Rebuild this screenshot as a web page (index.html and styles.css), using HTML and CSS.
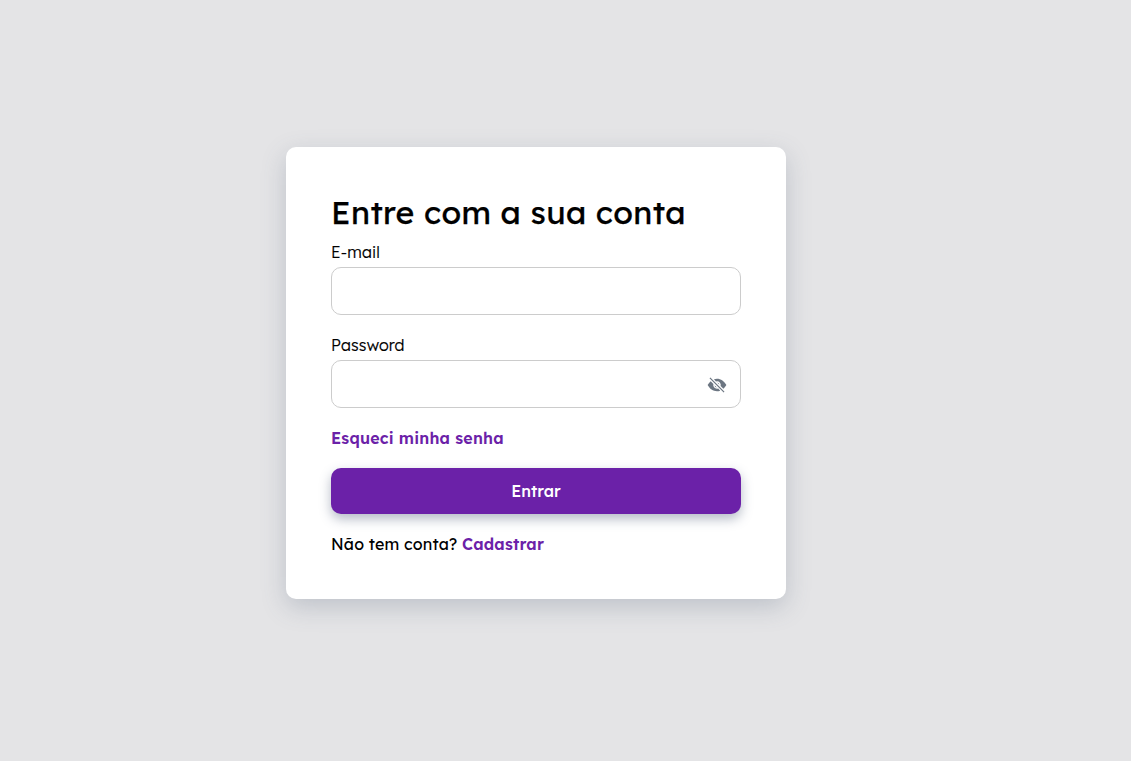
FILE: index.html
```html
<!DOCTYPE html>
<html lang="pt-BR">
<head>
<meta charset="utf-8">
<title>Entre com a sua conta</title>
<link rel="stylesheet" href="styles.css">
</head>
<body>
<main class="card">
  <h1 class="title">Entre com a sua conta</h1>
  <form class="form">
    <label class="label" for="email">E-mail</label>
    <div class="field"><input class="input" id="email" type="email"></div>
    <label class="label" for="password">Password</label>
    <div class="field">
      <input class="input" id="password" type="password">
      <svg class="eye" viewBox="0 0 512 512" fill="currentColor" aria-hidden="true">
        <path d="M63.998 86.004l21.998-21.998L448 426.01l-21.998 21.998zM259.34 192.09l60.57 60.57a64.07 64.07 0 0 0-60.57-60.57zM252.66 319.91l-60.57-60.57a64.07 64.07 0 0 0 60.57 60.57z"/>
        <path d="M256 352a96 96 0 0 1-92.6-121.34l-69.07-69.08C66.12 187.42 39.24 221.14 16 256c26.42 44 62.56 89.85 100.2 115.8C159.38 401.56 205.42 416 255.76 416a233.47 233.47 0 0 0 83.48-15.38l-52.3-52.3A96 96 0 0 1 256 352zM256 160a96 96 0 0 1 92.6 121.34L419.26 352c29.15-26.25 56.07-61.56 76.74-96-26.38-43.43-62.9-88.56-101.18-114.82C351.1 111.2 304.31 96 255.76 96a222.92 222.92 0 0 0-78.21 14.29l53.11 53.11A95.84 95.84 0 0 1 256 160z"/>
      </svg>
    </div>
    <a class="link forgot">Esqueci minha senha</a>
    <button class="button" type="button">Entrar</button>
    <p class="signup">Não tem conta? <a class="link">Cadastrar</a></p>
  </form>
</main>
</body>
</html>
```
FILE: styles.css
```css
* { box-sizing: border-box; }
body {
  margin: 0;
  height: 761px;
  padding: 147px 0 0 286px;
  overflow: hidden;
  background: #e4e4e6;
  color: #000;
  font-family: Lexend, Inter, "Open Sans", sans-serif;
  font-size: 16px;
  line-height: 20px;
  letter-spacing: .16px;
}
.card {
  width: 500px;
  height: 452px;
  padding: 45px;
  background: #fff;
  border-radius: 10px;
  box-shadow: 0 8px 24px rgba(80, 96, 120, .25);
}
.title {
  margin: 0 0 10px;
  font-size: 32px;
  font-weight: 400;
  line-height: 40px;
  letter-spacing: .35px;
  white-space: nowrap;
  -webkit-text-stroke: .25px #000;
}
.form { display: flex; flex-direction: column; }
.label { height: 25px; font-weight: 300; -webkit-text-stroke: .15px #000; }
.field { position: relative; height: 48px; margin-bottom: 20px; }
.input {
  width: 100%;
  height: 48px;
  padding: 0 44px 0 14px;
  border: 1px solid #ccc;
  border-radius: 10px;
  background: #fff;
  font: inherit;
  outline: none;
}
.eye {
  position: absolute;
  top: 14.5px;
  right: 14.5px;
  width: 20px;
  height: 20px;
  color: #6c7682;
}
.link { color: #6b21a8; font-weight: 600; letter-spacing: .19px; }
.forgot { align-self: flex-start; margin-bottom: 20px; }
.button {
  height: 46px;
  padding: 0;
  border: 0;
  border-radius: 10px;
  background: #6b21a8;
  color: #fff;
  font: inherit;
  font-weight: 500;
  letter-spacing: 0;
  box-shadow: 0 5px 12px rgba(70, 86, 115, .4);
}
.signup { margin: 20px 0 0; }
```
